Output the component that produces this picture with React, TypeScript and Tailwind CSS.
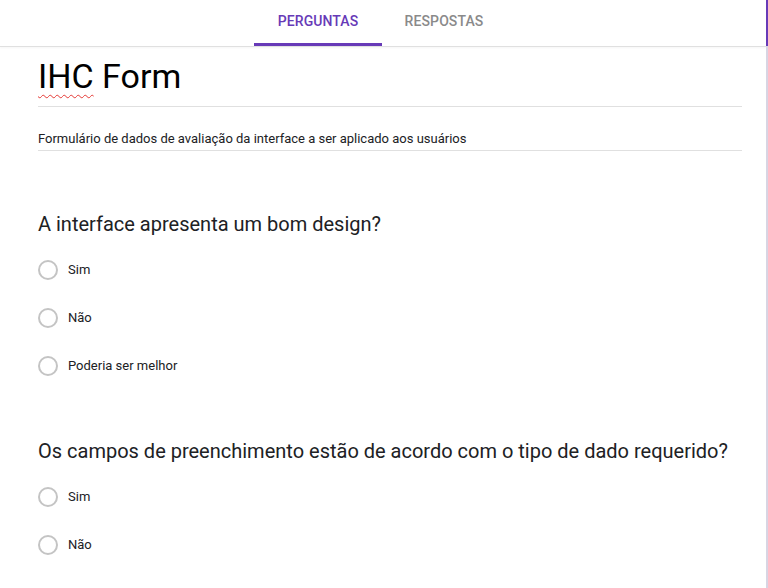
import React from "react";

type Question = {
  title: string;
  options: string[];
};

const questions: Question[] = [
  {
    title: "A interface apresenta um bom design?",
    options: ["Sim", "Não", "Poderia ser melhor"],
  },
  {
    title: "Os campos de preenchimento estão de acordo com o tipo de dado requerido?",
    options: ["Sim", "Não"],
  },
];

function Radio({ label }: { label: string }) {
  return (
    <label className="flex h-12 items-center gap-[10px] cursor-pointer">
      <span className="h-5 w-5 rounded-full border-2 border-[#c4c4c4] bg-white" />
      <span className="text-[13px] text-[#202124]">{label}</span>
    </label>
  );
}

export default function App() {
  return (
    <div
      className="flex h-[588px] w-[768px] overflow-hidden bg-white"
      style={{ fontFamily: "Roboto, 'Liberation Sans', sans-serif" }}
    >
      <div className="flex flex-1 flex-col">
        {/* Abas */}
        <div className="flex h-[47px] shrink-0 justify-center border-b border-[#e0e0e0] shadow-[0_1px_2px_rgba(0,0,0,0.04)]">
          <div className="flex pr-[6px]">
            <button className="flex w-[128px] flex-col items-center justify-end">
              <span className="pb-[11px] text-[14px] font-medium tracking-[0.1px] text-[#673ab7]">
                PERGUNTAS
              </span>
              <span className="h-[3px] w-full bg-[#673ab7]" />
            </button>
            <button className="flex w-[124px] flex-col items-center justify-end">
              <span className="pb-[14px] text-[14px] font-medium tracking-[0.1px] text-[#8a8a8a]">
                RESPOSTAS
              </span>
            </button>
          </div>
        </div>

        {/* Formulário */}
        <div className="pl-[38px] pr-[24px]">
          <div className="border-b border-[#e0e0e0] pt-[7px] pb-2">
            <h1 className="text-[34px] leading-[44px] text-black">
              <span className="underline decoration-wavy decoration-[#e53935] decoration-1 underline-offset-[6px]">
                IHC
              </span>{" "}
              Form
            </h1>
          </div>
          <div className="border-b border-[#e0e0e0] pt-[22px] pb-[1px]">
            <p className="text-[13px] leading-5 text-[#202124]">
              Formulário de dados de avaliação da interface a ser aplicado aos usuários
            </p>
          </div>

          <div className="mt-[59px] flex flex-col gap-[47px]">
            {questions.map((q) => (
              <section key={q.title} className="flex flex-col gap-2">
                <h2 className="text-[20px] leading-7 text-[#202124]">{q.title}</h2>
                <div className="flex flex-col">
                  {q.options.map((o) => (
                    <Radio key={o} label={o} />
                  ))}
                </div>
              </section>
            ))}
          </div>
        </div>
      </div>

      {/* Borda lateral */}
      <div className="flex w-[2px] flex-col">
        <div className="h-[46px] bg-[#673ab7]" />
        <div className="flex-1 bg-[#d8d5e3]" />
      </div>
    </div>
  );
}
